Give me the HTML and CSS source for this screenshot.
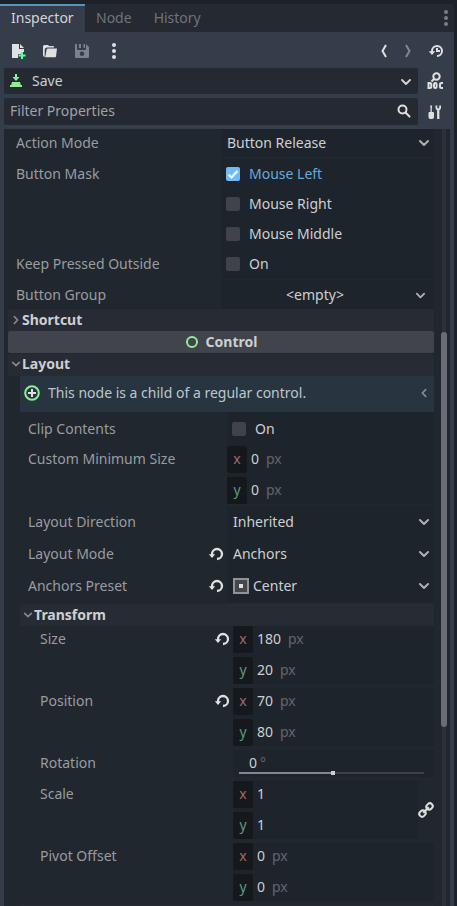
FILE: index.html
```html
<!DOCTYPE html>
<html lang="en">
<head>
<meta charset="UTF-8">
<meta name="viewport" content="width=device-width, initial-scale=1.0">
<title>Inspector</title>
<link rel="stylesheet" href="styles.css">
</head>
<body>
<svg class="defs" width="0" height="0">
  <symbol id="chevron" viewBox="0 0 12 12"><path d="M2 4l4 4 4-4" fill="none" stroke="currentColor" stroke-width="2" stroke-linecap="round" stroke-linejoin="round"/></symbol>
  <symbol id="revert" viewBox="0 0 16 16"><path d="M4 9V8a5 5 0 1 1 5 5" fill="none" stroke="currentColor" stroke-width="2.300"/><path d="M.8 8.300h6.400L4 12z" fill="currentColor"/></symbol>
  <symbol id="dots" viewBox="0 0 4 16"><circle cx="2" cy="2" r="2"/><circle cx="2" cy="8" r="2"/><circle cx="2" cy="14" r="2"/></symbol>
</svg>
<div class="dock">
  <div class="tabs">
    <div class="tab active">Inspector</div>
    <div class="tab">Node</div>
    <div class="tab">History</div>
    <svg class="tabs-menu" width="4" height="16"><use href="#dots"/></svg>
  </div>
  <div class="panel">
    <div class="toolbar">
      <svg width="16" height="16" viewBox="0 0 16 16"><path d="M2 1h7v5h5v3h-3v2H8v4H2z" fill="#e0e0e0"/><path d="M10 1l4 4h-4z" fill="#e0e0e0"/><path d="M11 9h2v2.500h2.500v2H13V16h-2v-2.500H8.500v-2H11z" fill="#5fff97"/></svg>
      <svg width="16" height="16" viewBox="0 0 16 16"><path d="M2.500 2A1.500 1.500 0 0 0 1 3.500V12a2 2 0 0 0 2 2l-.3-.5V7A2.500 2.500 0 0 1 5 4.500h7V4a1 1 0 0 0-1-1H7L6 2z" fill="#e0e0e0"/><path d="M6 5.500h9l-1 8a1 1 0 0 1-1 .8H3.200l1.400-7.500A1.500 1.500 0 0 1 6 5.500z" fill="#e0e0e0"/></svg>
      <svg class="disabled" width="16" height="16" viewBox="0 0 16 16"><path fill-rule="evenodd" d="M2 1h1v5a1 1 0 0 0 1 1h7a1 1 0 0 0 1-1V1l3 3v10a1 1 0 0 1-1 1H2a1 1 0 0 1-1-1V2a1 1 0 0 1 1-1zM8 8.500a2.300 2.300 0 1 0 0 4.600 2.300 2.300 0 0 0 0-4.600z"/><path d="M5 1h2v4H5zM9.500 1H11v4H9.500z"/></svg>
      <svg class="more" width="4" height="16"><use href="#dots"/></svg>
      <span class="spacer"></span>
      <svg width="8" height="16" viewBox="0 0 8 16"><path d="M6 2L2.500 8 6 14" fill="none" stroke="#e0e0e0" stroke-width="2"/></svg>
      <svg class="dim" width="8" height="16" viewBox="0 0 8 16"><path d="M2 2l3.500 6L2 14" fill="none" stroke="#e0e0e0" stroke-width="2"/></svg>
      <svg width="16" height="16" viewBox="0 0 16 16"><path d="M4 9V8a5 5 0 1 1 5 5" fill="none" stroke="#e0e0e0" stroke-width="2"/><path d="M.8 8.300h6.400L4 12zM8 5h2v2h2v2H8z" fill="#e0e0e0"/></svg>
    </div>
    <div class="bar">
      <div class="field node-name">
        <svg width="14" height="16" viewBox="0 0 14 16"><path d="M6 1h2v3h2.500L7 8 3.500 4H6zM3 9h8l1 4H2zM1 12h12v2H1z" fill="#8eef97"/></svg>
        <span>Save</span>
        <svg class="end" width="12" height="12"><use href="#chevron"/></svg>
      </div>
      <svg width="16" height="18" viewBox="0 0 16 18"><g fill="none" stroke="#e0e0e0" stroke-width="2"><circle cx="9.500" cy="4.500" r="3.200"/><path d="M7.200 6.700L4.500 9.500"/><path d="M1.500 11v5h1.300A1.500 1.500 0 0 0 4.300 14.500v-2A1.500 1.500 0 0 0 2.800 11zM7 12.300a1.300 1.300 0 0 1 2.600 0v2.400a1.300 1.300 0 0 1-2.600 0zM16 11h-1.500a1.500 1.500 0 0 0-1.500 1.500v2a1.500 1.500 0 0 0 1.500 1.500H16"/></g></svg>
    </div>
    <div class="bar">
      <div class="field filter">
        <span>Filter Properties</span>
        <svg class="end" width="16" height="16" viewBox="0 0 16 16"><circle cx="6.500" cy="6.500" r="4" fill="none" stroke="#e0e0e0" stroke-width="2"/><path d="M9.500 9.500l4 4" stroke="#e0e0e0" stroke-width="2" stroke-linecap="round"/></svg>
      </div>
      <svg width="16" height="16" viewBox="0 0 16 16"><path d="M3.200 1.500h2L4.800 4v4H6a1 1 0 0 1 1 1v4a2 2 0 0 1-2 2H3.500a2 2 0 0 1-2-2V9a1 1 0 0 1 1-1h1V4z" fill="#e0e0e0"/><path d="M8.500 1.500v2.300a2.800 2.800 0 0 0 1.600 2.500V15h2.300V6.300A2.800 2.800 0 0 0 14 3.800V1.500h-1.800v2.700h-1.900V1.500z" fill="#e0e0e0"/></svg>
    </div>
    <div class="list">
      <div class="props">
        <div class="row first"><span class="label">Action Mode</span><div class="value">Button Release<svg class="end" width="12" height="12"><use href="#chevron"/></svg></div></div>
        <div class="row flag"><span class="label">Button Mask</span><div class="value checked"><i class="check"><svg width="14" height="14" viewBox="0 0 14 14"><path d="M2.500 7.500l3 3 6-6.500" fill="none" stroke="#fff" stroke-width="2"/></svg></i>Mouse Left</div></div>
        <div class="row flag"><span class="label"></span><div class="value"><i class="check"></i>Mouse Right</div></div>
        <div class="row flag"><span class="label"></span><div class="value"><i class="check"></i>Mouse Middle</div></div>
        <div class="row flag"><span class="label">Keep Pressed Outside</span><div class="value"><i class="check"></i>On</div></div>
        <div class="row group"><span class="label">Button Group</span><div class="value resource"><span>&lt;empty&gt;</span><svg width="11" height="11"><use href="#chevron"/></svg></div></div>
        <div class="section closed"><svg width="10" height="10"><use href="#chevron"/></svg>Shortcut</div>
        <div class="category"><svg width="14" height="14" viewBox="0 0 14 14"><circle cx="7" cy="7" r="5" fill="none" stroke="#8eef97" stroke-width="2"/></svg>Control</div>
        <div class="section layout"><svg width="10" height="10"><use href="#chevron"/></svg>Layout</div>
        <div class="level-1">
          <div class="info">
            <svg width="16" height="16" viewBox="0 0 16 16"><circle cx="8" cy="8" r="6.800" fill="none" stroke="#8eef97" stroke-width="2"/><path d="M8 4v8M4 8h8" stroke="#e0e0e0" stroke-width="2"/></svg>
            <span>This node is a child of a regular control.</span>
            <svg class="end" width="10" height="10"><use href="#chevron"/></svg>
          </div>
          <div class="row flag clip"><span class="label">Clip Contents</span><div class="value"><i class="check"></i>On</div></div>
          <div class="row vector">
            <span class="label">Custom Minimum Size</span>
            <div class="axes">
              <div class="axis"><b class="x">x</b>0<em>px</em></div>
              <div class="axis"><b class="y">y</b>0<em>px</em></div>
            </div>
          </div>
          <div class="row option"><span class="label">Layout Direction</span><div class="value">Inherited<svg class="end" width="12" height="12"><use href="#chevron"/></svg></div></div>
          <div class="row option"><span class="label">Layout Mode<svg class="revert" width="16" height="16"><use href="#revert"/></svg></span><div class="value">Anchors<svg class="end" width="12" height="12"><use href="#chevron"/></svg></div></div>
          <div class="row option"><span class="label">Anchors Preset<svg class="revert" width="16" height="16"><use href="#revert"/></svg></span><div class="value"><i class="preset"></i>Center<svg class="end" width="12" height="12"><use href="#chevron"/></svg></div></div>
          <div class="section transform"><svg width="10" height="10"><use href="#chevron"/></svg>Transform</div>
          <div class="level-2">
            <div class="row vector">
              <span class="label">Size<svg class="revert" width="16" height="16"><use href="#revert"/></svg></span>
              <div class="axes">
                <div class="axis"><b class="x">x</b>180<em>px</em></div>
                <div class="axis"><b class="y">y</b>20<em>px</em></div>
              </div>
            </div>
            <div class="row vector">
              <span class="label">Position<svg class="revert" width="16" height="16"><use href="#revert"/></svg></span>
              <div class="axes">
                <div class="axis"><b class="x">x</b>70<em>px</em></div>
                <div class="axis"><b class="y">y</b>80<em>px</em></div>
              </div>
            </div>
            <div class="row vector">
              <span class="label">Rotation</span>
              <div class="rotation">
                <div class="degrees">0<em>°</em></div>
                <div class="slider"><span class="fill"></span><span class="grabber"></span><span class="rest"></span></div>
              </div>
            </div>
            <div class="row vector">
              <span class="label">Scale</span>
              <div class="axes">
                <div class="axis"><b class="x">x</b>1</div>
                <div class="axis"><b class="y">y</b>1</div>
              </div>
              <svg class="link" width="16" height="16" viewBox="0 0 16 16"><g transform="rotate(-45 8 8)" fill="none" stroke="#e0e0e0" stroke-width="2"><rect x="-.3" y="5.200" width="6.600" height="5.600" rx="2.800"/><rect x="9.700" y="5.200" width="6.600" height="5.600" rx="2.800"/><path d="M4 8h8"/></g></svg>
            </div>
            <div class="row vector">
              <span class="label">Pivot Offset</span>
              <div class="axes">
                <div class="axis"><b class="x">x</b>0<em>px</em></div>
                <div class="axis"><b class="y">y</b>0<em>px</em></div>
              </div>
            </div>
          </div>
          <div class="section next"></div>
        </div>
      </div>
      <div class="scrollbar"><div class="thumb"></div></div>
    </div>
  </div>
</div>
</body>
</html>
```
FILE: styles.css
```css
* {
  box-sizing: border-box;
}
body {
  margin: 0;
  height: 906px;
  overflow: hidden;
  background: #1d2229;
  color: #cdcfd2;
  font-family: "Noto Sans", sans-serif;
  font-size: 14px;
  line-height: 20px;
}
svg {
  display: block;
  flex: none;
  overflow: visible;
}
.defs {
  position: absolute;
}
.dock {
  width: 454px;
  height: 906px;
  padding-top: 4px;
  display: flex;
  flex-direction: column;
}

/* tabs */
.tabs {
  display: flex;
  height: 28px;
  background: #252932;
  border-radius: 0 4px 0 0;
}
.tab {
  padding: 4px 11px;
  color: #70747b;
}
.tab.active {
  width: 85px;
  padding-top: 2px;
  border-top: 2px solid #5c92b9;
  background: #363d4a;
  color: #d3d5d8;
}
.tabs-menu {
  margin: 6px 6px 0 auto;
  fill: #7b7e85;
}
.panel {
  flex: 1;
  min-height: 0;
  display: flex;
  flex-direction: column;
  padding: 0 4px;
  background: #363d4a;
}

/* toolbar */
.toolbar {
  display: flex;
  align-items: center;
  height: 36px;
  padding: 2px 6px 0;
  gap: 16px;
}
.toolbar .disabled {
  fill: #7d818b;
}
.toolbar .more {
  margin-left: 6px;
  fill: #e0e0e0;
}
.spacer {
  flex: 1;
}
.dim {
  opacity: .45;
}
.bar {
  display: flex;
  align-items: center;
  justify-content: space-between;
  height: 26px;
  margin-bottom: 4px;
  padding-right: 7px;
}
.bar + .bar {
  height: 27px;
}
.field {
  display: flex;
  align-items: center;
  width: 414px;
  height: 100%;
  border-radius: 2px;
  background: #252932;
}
.node-name {
  padding: 0 6px 0 5px;
}
.node-name span {
  margin-left: 9px;
}
.node-name .end {
  margin-top: 2px;
}
.filter {
  padding: 0 6px 2px;
  color: #a0a3a8;
}
.end {
  margin-left: auto;
}

/* property list */
.list {
  flex: 1;
  min-height: 0;
  display: flex;
  justify-content: space-between;
  background: #21272e;
  width: 446px;
  overflow: hidden;
}
.props {
  width: 430px;
  padding-left: 4px;
}
.row {
  display: flex;
  height: 30px;
}
.label {
  display: flex;
  align-items: center;
  width: 213px;
  padding-left: 8px;
  color: #999ca0;
}
.value {
  flex: 1;
  display: flex;
  align-items: center;
  padding: 0 4px 0 6px;
  background: #1e242b;
}
.value .end,
.resource svg {
  color: #aeb1b5;
}
.first {
  padding-bottom: 2px;
}
.group {
  padding-top: 1px;
}
.flag .value {
  padding-left: 5px;
}
.check {
  width: 14px;
  height: 14px;
  margin-right: 9px;
  border-radius: 2px;
  background: #404349;
}
.checked {
  color: #68a9db;
}
.checked .check {
  background: #70bafa;
}
.resource {
  padding-right: 8px;
}
.resource span {
  flex: 1;
  padding-right: 12px;
  text-align: center;
}
.resource svg {
  margin-top: 2px;
}
.section {
  display: flex;
  align-items: center;
  height: 22px;
  padding-left: 3px;
  gap: 1px;
  border-radius: 2px;
  background: #272c34;
  font-weight: bold;
}
.section svg {
  color: #83868b;
}
.closed svg {
  transform: rotate(-90deg);
}
.category {
  display: flex;
  align-items: center;
  justify-content: center;
  gap: 7px;
  height: 22px;
  border-radius: 2px;
  background: #41444c;
  font-weight: bold;
}
.layout {
  margin-top: 1px;
  padding-bottom: 2px;
}

/* layout section */
.level-1 {
  padding-left: 12px;
}
.info {
  display: flex;
  align-items: center;
  height: 36px;
  padding: 0 5px 2px 4px;
  background: #293441;
  color: #b9c8ce;
}
.info span {
  margin-left: 8px;
}
.info .end {
  color: #81909b;
  transform: rotate(90deg);
}
.level-1 .label {
  width: 207px;
}
.clip {
  height: 34px;
}
.vector {
  height: auto;
  padding-bottom: 4px;
}
.clip + .vector {
  padding-bottom: 2px;
}
.vector .label {
  height: 25px;
}
.axes {
  flex: 1;
  display: flex;
  flex-direction: column;
  gap: 4px;
  background: #1e242b;
}
.axis {
  display: flex;
  height: 27px;
  line-height: 25px;
}
.axis b {
  width: 20px;
  margin-right: 4px;
  border-radius: 2px;
  background: #15191e;
  font-weight: normal;
  text-align: center;
}
.x {
  color: #a56a63;
}
.y {
  color: #5b9b78;
}
em {
  margin-left: 7px;
  color: #62666b;
  font-style: normal;
}
.option {
  height: 32px;
}
.revert {
  margin-left: auto;
  margin-right: 3px;
  color: #e0e0e0;
}
.preset {
  width: 16px;
  height: 16px;
  margin-right: 4px;
  padding: 4px;
  border: 2px solid #919394;
  background: #e0e0e0 content-box;
  box-shadow: inset 0 0 0 4px #44484c;
}
.transform {
  margin-top: 2px;
}

/* transform section */
.level-2 {
  padding-left: 12px;
}
.level-2 .label {
  width: 201px;
}
.rotation {
  flex: 1;
  height: 27px;
  padding: 3px 10px 0 6px;
  background: #1e242b;
}
.degrees {
  height: 18px;
  padding-left: 10px;
}
.degrees em {
  margin-left: 3px;
}
.slider {
  display: flex;
  align-items: center;
}
.fill {
  width: 92px;
  height: 2px;
  background: #85898c;
}
.grabber {
  width: 4px;
  height: 4px;
  background: #cdcfd2;
}
.rest {
  flex: 1;
  height: 2px;
  background: #3d4146;
}
.link {
  align-self: center;
}
.scrollbar {
  width: 6px;
  margin-right: 3px;
  background: linear-gradient(#2c3038, #2c3038) center / 4px 100% no-repeat;
}
.thumb {
  height: 395px;
  margin-top: 203px;
  border-radius: 3px;
  background: #6a6d75;
}
```
